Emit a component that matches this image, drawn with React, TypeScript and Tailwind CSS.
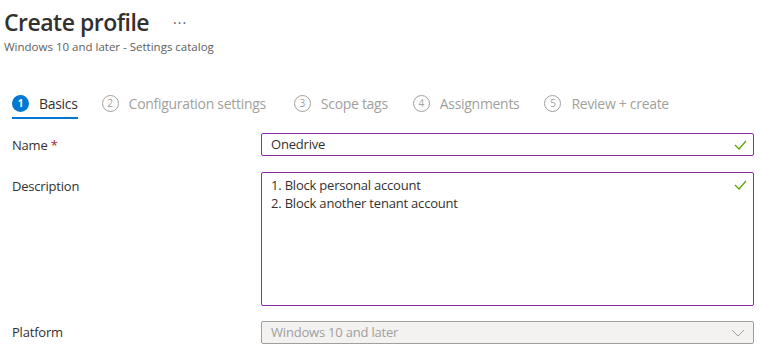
import { useState } from 'react';

const steps = [
  { n: 1, label: 'Basics', gap: 'mr-[24px]' },
  { n: 2, label: 'Configuration settings', gap: 'mr-[28px]' },
  { n: 3, label: 'Scope tags', gap: 'mr-[25px]' },
  { n: 4, label: 'Assignments', gap: 'mr-[25px]' },
  { n: 5, label: 'Review + create', gap: 'mr-0' },
];

function Check() {
  return (
    <svg width="13" height="10" viewBox="0 0 13 10" className="shrink-0">
      <path d="M1 5l4 4 7-8" fill="none" stroke="#57a300" strokeWidth="1.2" />
    </svg>
  );
}

export default function App() {
  const [name, setName] = useState('Onedrive');
  const active = 1;

  return (
    <div
      className="w-[760px] h-[353px] overflow-hidden bg-white text-[#323130]"
      style={{ fontFamily: '"Open Sans", "Noto Sans", sans-serif' }}
    >
      <div className="pl-[4px] pt-[6px]">
        <div className="flex items-center">
          <h1 className="text-[23px] leading-[32px] font-semibold tracking-[-0.5px]">Create profile</h1>
          <span className="ml-[24px] text-[14px] leading-none text-[#605e5c] tracking-[1px] -mt-[6px]">...</span>
        </div>
        <p className="text-[11.5px] leading-[16px] text-[#605e5c] mt-[1px]">Windows 10 and later - Settings catalog</p>
      </div>

      <div className="flex items-center pl-[12px] mt-[31px]">
        {steps.map((s) => (
          <div key={s.n} className={`relative flex items-center h-[34px] ${s.gap}`}>
            {s.n === active ? (
              <span className="w-[17px] h-[17px] rounded-full bg-[#0078d4] text-white text-[10px] font-bold flex items-center justify-center">
                {s.n}
              </span>
            ) : (
              <span className="w-[17px] h-[17px] rounded-full border border-[#a19f9d] text-[#a19f9d] text-[10px] flex items-center justify-center">
                {s.n}
              </span>
            )}
            <span
              className={
                s.n === active
                  ? 'ml-[10px] text-[14px] text-[#323130] tracking-[-0.3px]'
                  : 'ml-[10px] text-[14px] text-[#a19f9d] tracking-[-0.3px]'
              }
            >
              {s.label}
            </span>
            {s.n === active && <span className="absolute left-0 right-0 bottom-[1px] h-[2px] bg-[#0078d4]" />}
          </div>
        ))}
      </div>

      <div className="grid grid-cols-[249px_493px] pl-[12px] mt-[13px] text-[13px] tracking-[-0.2px]">
        <div className="pt-[3px] leading-[18px]">
          Name <span className="text-[#a4262c]">*</span>
        </div>
        <div className="h-[23px] border border-[#8a2da5] rounded-[2px] flex items-center pl-[9px] pr-[6px]">
          <input
            value={name}
            onChange={(e) => setName(e.target.value)}
            className="flex-1 outline-none bg-transparent text-[13px] text-[#323130]"
          />
          <Check />
        </div>

        <div className="pt-[5px] leading-[18px] mt-[16px]">Description</div>
        <div className="h-[134px] border border-[#8a2da5] rounded-[2px] mt-[16px] flex items-start pl-[9px] pr-[6px] pt-[3px]">
          <div className="flex-1 leading-[18px]">
            <div>1. Block personal account</div>
            <div>2. Block another tenant account</div>
          </div>
          <div className="pt-[4px]">
            <Check />
          </div>
        </div>

        <div className="pt-[2px] leading-[18px] mt-[15px]">Platform</div>
        <div className="h-[23px] border border-[#a19f9d] bg-[#f3f2f1] rounded-[2px] mt-[15px] flex items-center pl-[9px] pr-[8px] text-[#a19f9d]">
          <span className="flex-1">Windows 10 and later</span>
          <svg width="14" height="8" viewBox="0 0 14 8">
            <path d="M1 1l6 6 6-6" fill="none" stroke="#a19f9d" strokeWidth="1" />
          </svg>
        </div>
      </div>
    </div>
  );
}
